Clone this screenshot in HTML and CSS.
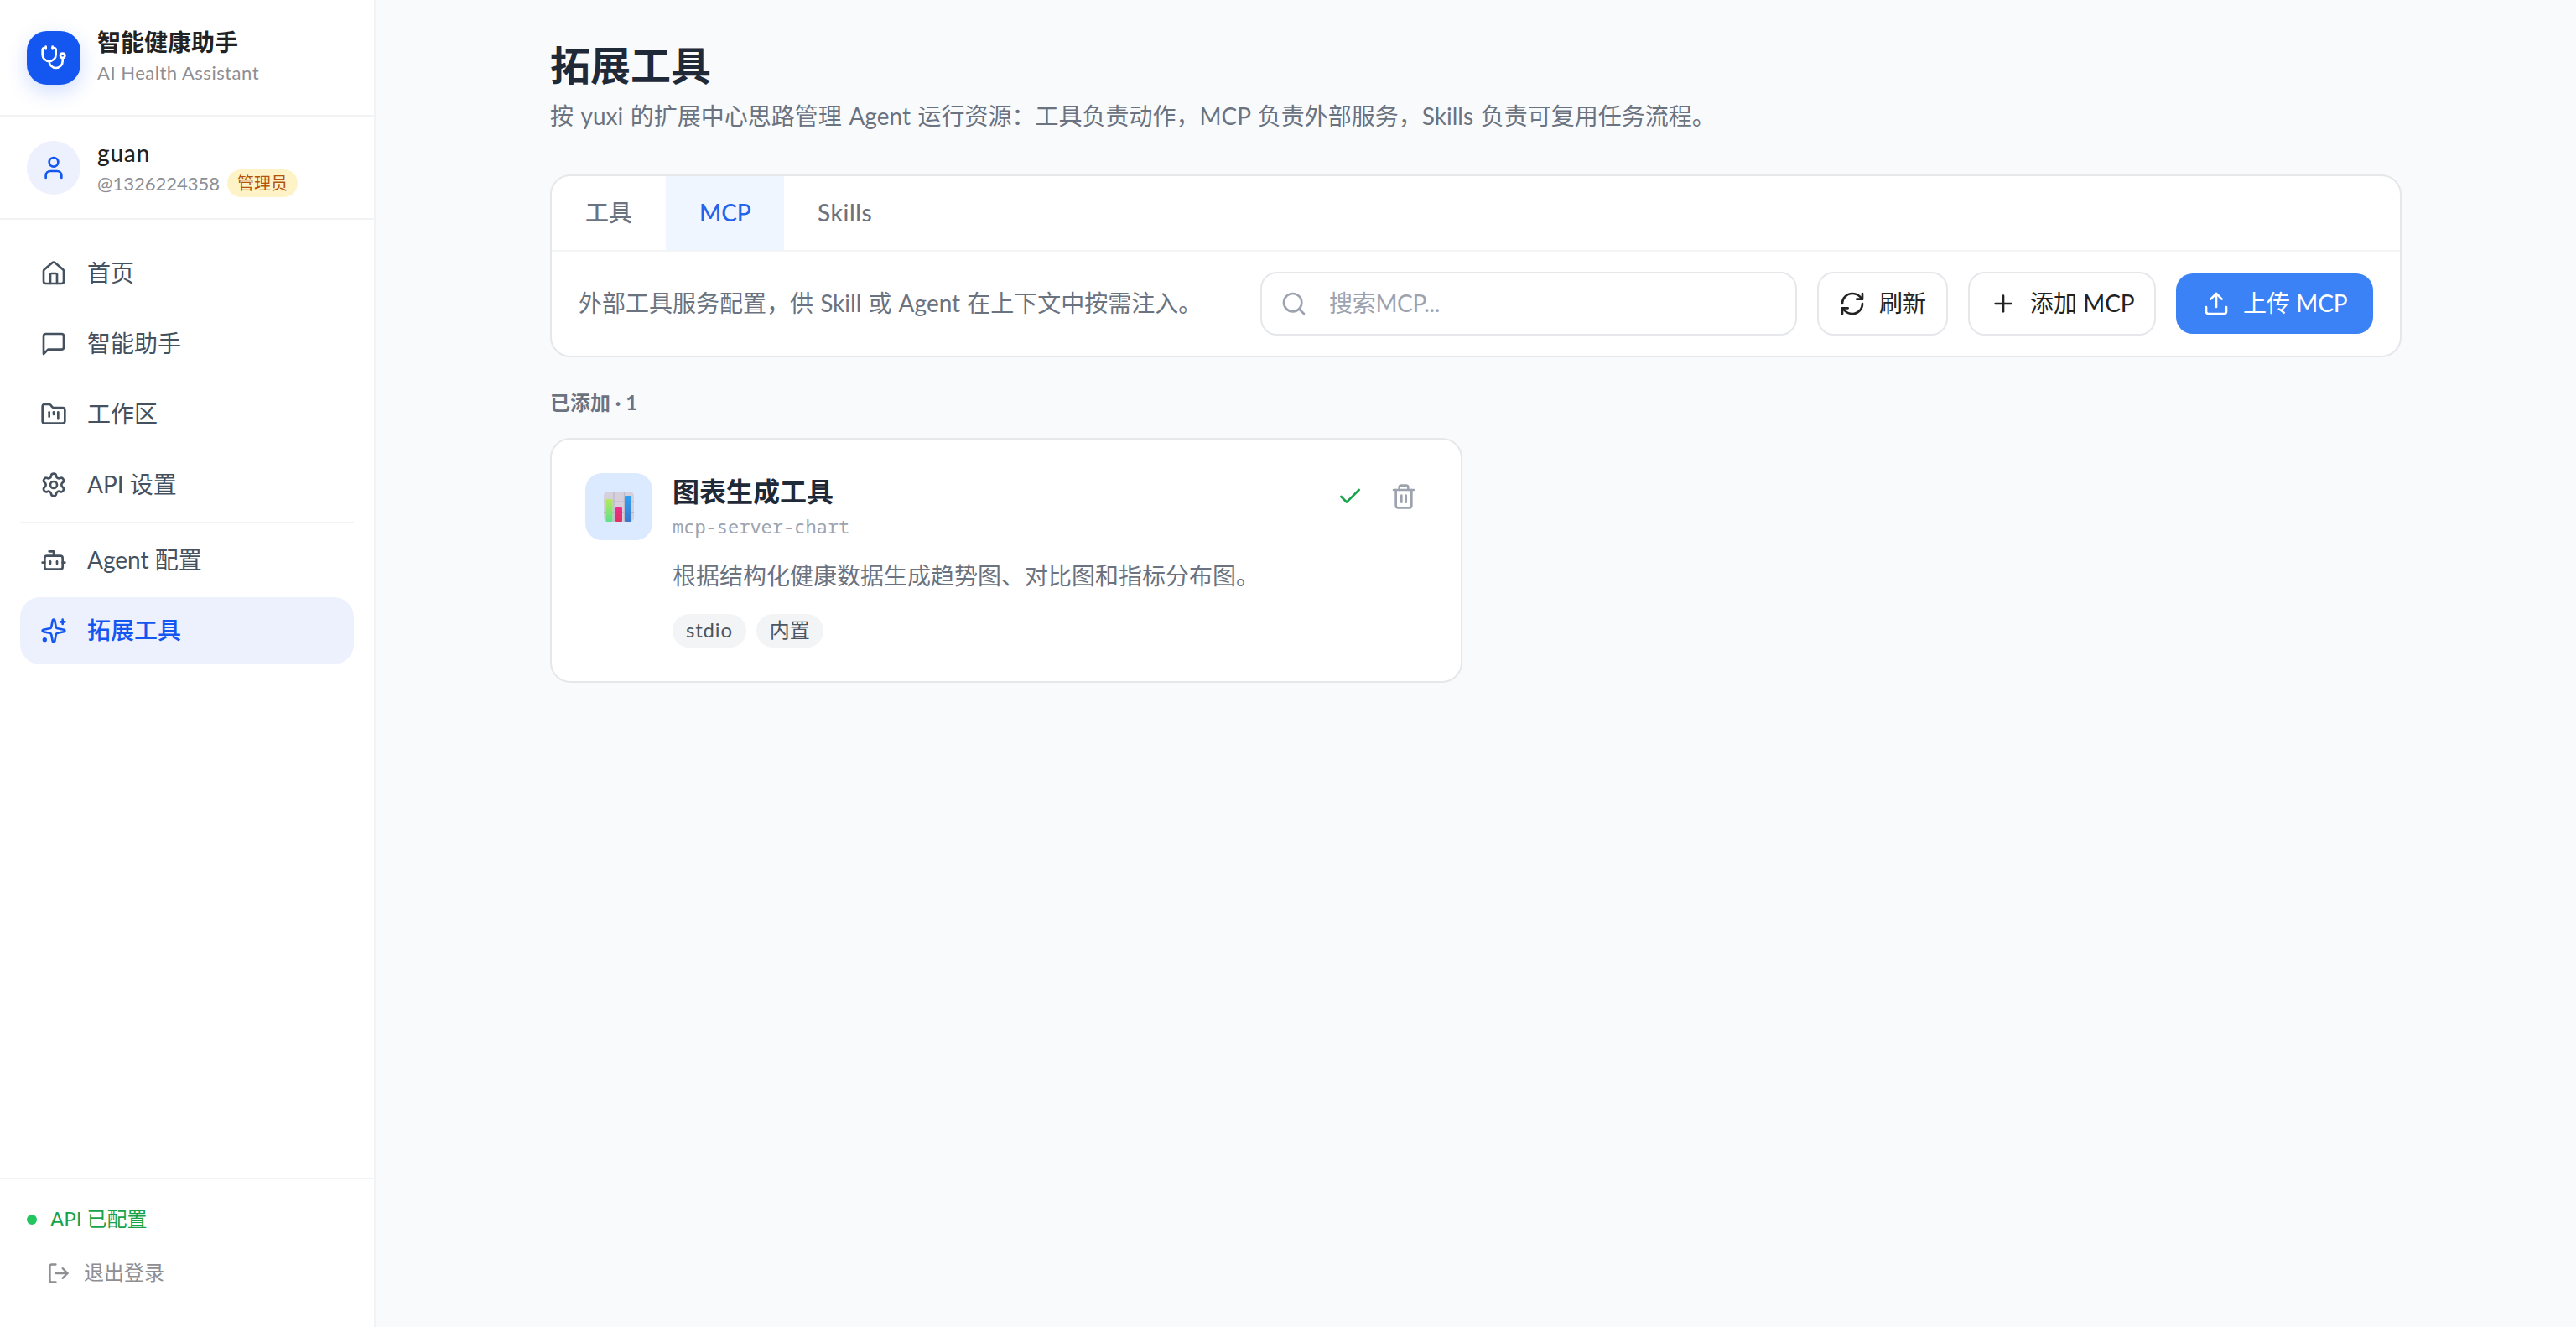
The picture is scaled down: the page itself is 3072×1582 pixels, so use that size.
FILE: index.html
```html
<!DOCTYPE html>
<html lang="zh-CN">
<head>
    <meta charset="UTF-8">
    <meta name="viewport" content="width=device-width, initial-scale=1">
    <title>智能健康助手 - 拓展工具</title>
    <link rel="stylesheet" href="styles.css">
</head>
<body>
<!-- 侧边栏 -->
<aside class="sidebar">
    <div class="brand">
        <div class="brand-logo">
            <svg class="icon" viewBox="0 0 24 24"><path d="M11 2v2"/><path d="M5 2v2"/><path d="M5 3H4a2 2 0 0 0-2 2v4a6 6 0 0 0 12 0V5a2 2 0 0 0-2-2h-1"/><path d="M8 15a6 6 0 0 0 12 0v-3"/><circle cx="20" cy="10" r="2"/></svg>
        </div>
        <div class="brand-text">
            <h2>智能健康助手</h2>
            <p>AI Health Assistant</p>
        </div>
    </div>
    <div class="user">
        <div class="avatar">
            <svg class="icon" viewBox="0 0 24 24"><path d="M19 21v-2a4 4 0 0 0-4-4H9a4 4 0 0 0-4 4v2"/><circle cx="12" cy="7" r="4"/></svg>
        </div>
        <div class="user-text">
            <div class="user-name">guan</div>
            <div class="user-meta"><span class="user-id">@1326224358</span><span class="role">管理员</span></div>
        </div>
    </div>
    <nav class="menu">
        <a href="#" class="menu-item">
            <svg class="icon" viewBox="0 0 24 24"><path d="M15 21v-8a1 1 0 0 0-1-1h-4a1 1 0 0 0-1 1v8"/><path d="M3 10a2 2 0 0 1 .709-1.528l7-5.999a2 2 0 0 1 2.582 0l7 5.999A2 2 0 0 1 21 10v9a2 2 0 0 1-2 2H5a2 2 0 0 1-2-2z"/></svg>
            <span>首页</span>
        </a>
        <a href="#" class="menu-item">
            <svg class="icon" viewBox="0 0 24 24"><path d="M21 15a2 2 0 0 1-2 2H7l-4 4V5a2 2 0 0 1 2-2h14a2 2 0 0 1 2 2z"/></svg>
            <span>智能助手</span>
        </a>
        <a href="#" class="menu-item">
            <svg class="icon" viewBox="0 0 24 24"><path d="M4 20h16a2 2 0 0 0 2-2V8a2 2 0 0 0-2-2h-7.93a2 2 0 0 1-1.66-.9l-.82-1.2A2 2 0 0 0 7.93 3H4a2 2 0 0 0-2 2v13c0 1.1.9 2 2 2Z"/><path d="M8 10v4"/><path d="M12 10v2"/><path d="M16 10v6"/></svg>
            <span>工作区</span>
        </a>
        <a href="#" class="menu-item">
            <svg class="icon" viewBox="0 0 24 24"><path d="M9.671 4.136a2.34 2.34 0 0 1 4.659 0 2.34 2.34 0 0 0 3.319 1.915 2.34 2.34 0 0 1 2.33 4.033 2.34 2.34 0 0 0 0 3.831 2.34 2.34 0 0 1-2.33 4.033 2.34 2.34 0 0 0-3.319 1.915 2.34 2.34 0 0 1-4.659 0 2.34 2.34 0 0 0-3.32-1.915 2.34 2.34 0 0 1-2.33-4.033 2.34 2.34 0 0 0 0-3.831A2.34 2.34 0 0 1 6.35 6.051a2.34 2.34 0 0 0 3.319-1.915"/><circle cx="12" cy="12" r="3"/></svg>
            <span>API 设置</span>
        </a>
        <div class="menu-divider"></div>
        <a href="#" class="menu-item">
            <svg class="icon" viewBox="0 0 24 24"><path d="M12 8V4H8"/><rect width="16" height="12" x="4" y="8" rx="2"/><path d="M2 14h2"/><path d="M20 14h2"/><path d="M15 13v2"/><path d="M9 13v2"/></svg>
            <span>Agent 配置</span>
        </a>
        <a href="#" class="menu-item active">
            <svg class="icon" viewBox="0 0 24 24"><path d="M11.017 2.814a1 1 0 0 1 1.966 0l1.051 5.558a2 2 0 0 0 1.594 1.594l5.558 1.051a1 1 0 0 1 0 1.966l-5.558 1.051a2 2 0 0 0-1.594 1.594l-1.051 5.558a1 1 0 0 1-1.966 0l-1.051-5.558a2 2 0 0 0-1.594-1.594l-5.558-1.051a1 1 0 0 1 0-1.966l5.558-1.051a2 2 0 0 0 1.594-1.594z"/><path d="M20 2v4"/><path d="M22 4h-4"/><circle cx="4" cy="20" r="1" /></svg>
            <span>拓展工具</span>
        </a>
    </nav>
    <div class="sidebar-footer">
        <div class="api-status"><span class="dot"></span><span class="label">API 已配置</span></div>
        <a href="#" class="logout">
            <svg class="icon" viewBox="0 0 24 24"><path d="m16 17 5-5-5-5"/><path d="M21 12H9"/><path d="M9 21H5a2 2 0 0 1-2-2V5a2 2 0 0 1 2-2h4"/></svg>
            <span class="label">退出登录</span>
        </a>
    </div>
</aside>

<!-- 内容区 -->
<main class="content">
    <div class="container">
        <h1>拓展工具</h1>
        <p class="subtitle">按 yuxi 的扩展中心思路管理 Agent 运行资源：工具负责动作，MCP 负责外部服务，Skills 负责可复用任务流程。</p>

        <section class="panel">
            <div class="tabs">
                <button class="tab">工具</button>
                <button class="tab active">MCP</button>
                <button class="tab tab-skills">Skills</button>
            </div>
            <div class="toolbar">
                <p class="toolbar-text">外部工具服务配置，供 Skill 或 Agent 在上下文中按需注入。</p>
                <label class="search">
                    <svg class="icon" viewBox="0 0 24 24"><path d="m21 21-4.34-4.34"/><circle cx="11" cy="11" r="8"/></svg>
                    <input type="text" placeholder="搜索MCP...">
                </label>
                <button class="btn btn-refresh">
                    <svg class="icon" viewBox="0 0 24 24"><path d="M3 12a9 9 0 0 1 9-9 9.75 9.75 0 0 1 6.74 2.74L21 8"/><path d="M21 3v5h-5"/><path d="M21 12a9 9 0 0 1-9 9 9.75 9.75 0 0 1-6.74-2.74L3 16"/><path d="M8 16H3v5"/></svg>
                    <span>刷新</span>
                </button>
                <button class="btn btn-add">
                    <svg class="icon" viewBox="0 0 24 24"><path d="M5 12h14"/><path d="M12 5v14"/></svg>
                    <span>添加 MCP</span>
                </button>
                <button class="btn btn-primary">
                    <svg class="icon" viewBox="0 0 24 24"><path d="M12 3v12"/><path d="m17 8-5-5-5 5"/><path d="M21 15v4a2 2 0 0 1-2 2H5a2 2 0 0 1-2-2v-4"/></svg>
                    <span>上传 MCP</span>
                </button>
            </div>
        </section>

        <h3 class="group-title">已添加 · 1</h3>
        <div class="grid">
            <article class="card">
                <div class="card-icon">
                    <!-- 柱状图 -->
                    <svg class="chart" viewBox="0 0 36 36">
                        <defs>
                            <linearGradient id="barGreen" x1="0" y1="0" x2="0" y2="1"><stop offset="0" stop-color="#b4e95c"/><stop offset="1" stop-color="#5fe08c"/></linearGradient>
                            <linearGradient id="barPink" x1="0" y1="0" x2="0" y2="1"><stop offset="0" stop-color="#ef2e8c"/><stop offset="1" stop-color="#dc3360"/></linearGradient>
                            <linearGradient id="barBlue" x1="0" y1="0" x2="0" y2="1"><stop offset="0" stop-color="#2fa2f5"/><stop offset="1" stop-color="#3a78cc"/></linearGradient>
                        </defs>
                        <rect width="36" height="36" rx="5" fill="#d6d0dc"/>
                        <path d="M12 0v36M24.500 0v36M0 12h36M0 24.500h36" stroke="#bdb7c6" stroke-width="1.200"/>
                        <rect x="2.500" y="9" width="8" height="27" rx="1" fill="url(#barGreen)"/>
                        <rect x="14" y="19" width="8" height="17" rx="1" fill="url(#barPink)"/>
                        <rect x="25" y="5" width="8" height="31" rx="1" fill="url(#barBlue)"/>
                    </svg>
                </div>
                <div class="card-body">
                    <h4>图表生成工具</h4>
                    <div class="card-slug">mcp-server-chart</div>
                    <p class="card-desc">根据结构化健康数据生成趋势图、对比图和指标分布图。</p>
                    <div class="tags"><span class="tag tag-latin">stdio</span><span class="tag">内置</span></div>
                </div>
                <div class="card-actions">
                    <button class="icon-btn check"><svg class="icon" viewBox="0 0 24 24"><path d="M20 6 9 17l-5-5"/></svg></button>
                    <button class="icon-btn"><svg class="icon" viewBox="0 0 24 24"><path d="M3 6h18"/><path d="M19 6v14a2 2 0 0 1-2 2H7a2 2 0 0 1-2-2V6"/><path d="M8 6V4a2 2 0 0 1 2-2h4a2 2 0 0 1 2 2v2"/><path d="M10 11v6"/><path d="M14 11v6"/></svg></button>
                </div>
            </article>
        </div>
    </div>
</main>
</body>
</html>
```
FILE: styles.css
```css
/* 全局 */
* { box-sizing: border-box; margin: 0; padding: 0; }
body {
    font-family: Lato, "Noto Sans CJK SC", sans-serif;
    font-size: 28px;
    line-height: 40px;
    color: #222222;
    background: #f9fafc;
    display: flex;
    height: 100vh;
    overflow: hidden;
}
a { color: inherit; text-decoration: none; }
button { font: inherit; background: none; border: none; cursor: pointer; }
.icon {
    width: 32px;
    height: 32px;
    flex-shrink: 0;
    fill: none;
    stroke: currentColor;
    stroke-width: 2;
    stroke-linecap: round;
    stroke-linejoin: round;
}

/* 侧边栏 */
.sidebar {
    width: 448px;
    flex-shrink: 0;
    display: flex;
    flex-direction: column;
    background: #fff;
    border-right: 2px solid #f2f3f5;
}
.brand {
    display: flex;
    align-items: center;
    gap: 20px;
    height: 139px;
    padding: 0 32px;
    border-bottom: 2px solid #f2f3f5;
}
.brand-logo {
    width: 64px;
    height: 64px;
    display: flex;
    align-items: center;
    justify-content: center;
    border-radius: 24px;
    background: #1456f0;
    color: #fff;
    box-shadow: 0 8px 24px rgba(20,86,240,0.2);
}
.brand-text h2 { font-size: 28px; line-height: 36px; font-weight: 700; }
.brand-text p {
    font-size: 22px;
    line-height: 37px;
    letter-spacing: 0.5px;
    color: #8e8e93;
}
.user {
    display: flex;
    align-items: center;
    gap: 20px;
    height: 123px;
    padding: 0 32px;
    border-bottom: 2px solid #f2f3f5;
}
.avatar {
    width: 64px;
    height: 64px;
    display: flex;
    align-items: center;
    justify-content: center;
    border-radius: 50%;
    background: #edf1fe;
    color: #1456f0;
}
.user-name {
    line-height: 36px;
    padding-bottom: 2px;
    font-weight: 500;
    letter-spacing: 0.8px;
}
.user-meta {
    display: flex;
    align-items: center;
    gap: 9px;
    font-size: 22px;
    line-height: 33px;
    color: #8e8e93;
}
.role {
    padding: 0 12px;
    border-radius: 17px;
    font-size: 20px;
    background: #fef3c7;
    color: #b45309;
}

/* 菜单 */
.menu {
    flex: 1;
    display: flex;
    flex-direction: column;
    gap: 4px;
    padding: 24px 24px 0;
}
.menu-item {
    display: flex;
    align-items: center;
    gap: 24px;
    height: 80px;
    padding: 0 24px;
    border-radius: 24px;
    color: #45515e;
}
.menu-item span, .btn span { padding-bottom: 3px; }
.menu-item.active {
    font-weight: 500;
    background: #edf1fe;
    color: #1456f0;
}
.menu-divider { height: 2px; background: #f2f3f5; }
.sidebar-footer {
    height: 178px;
    padding: 28px 32px;
    border-top: 2px solid #f2f3f5;
    font-size: 24px;
}
.sidebar-footer .label { padding-bottom: 2px; line-height: 38px; }
.api-status {
    display: flex;
    align-items: center;
    gap: 16px;
    color: #16a34a;
}
.dot {
    width: 12px;
    height: 12px;
    border-radius: 50%;
    background: #22c55e;
}
.logout {
    display: flex;
    align-items: center;
    gap: 16px;
    margin-top: 24px;
    padding-left: 24px;
    color: #8e8e93;
}
.logout .icon { width: 28px; height: 28px; }

/* 内容区 */
.content {
    flex: 1;
    padding: 48px 208px;
}
h1 {
    font-size: 48px;
    line-height: 60px;
    font-weight: 700;
    color: #1f2937;
}
.subtitle {
    margin-top: 10px;
    color: #6b7280;
    word-spacing: 1.4px;
}
.panel {
    margin-top: 50px;
    border: 2px solid #e5e7eb;
    border-radius: 24px;
    background: #fff;
    overflow: hidden;
}
.tabs {
    display: flex;
    height: 90px;
    border-bottom: 2px solid #f3f4f6;
}
.tab {
    padding: 0 40px 3px;
    font-weight: 500;
    color: #6b7280;
}
.tab.active {
    width: 141px;
    background: #eff6ff;
    color: #2563eb;
}
.tab-skills { letter-spacing: 0.6px; }
.toolbar {
    display: flex;
    align-items: center;
    gap: 24px;
    padding: 24px 32px;
}
.toolbar-text {
    flex: 1;
    padding-bottom: 3px;
    white-space: nowrap;
    color: #6b7280;
    word-spacing: 1px;
}
.search {
    display: flex;
    align-items: center;
    gap: 26px;
    width: 640px;
    height: 76px;
    padding: 0 22px;
    border: 2px solid #e5e7eb;
    border-radius: 20px;
    color: #9ca3af;
}
.search input {
    flex: 1;
    min-width: 0;
    padding-bottom: 3px;
    border: none;
    outline: none;
    font: inherit;
    background: none;
}
.search input::placeholder { color: #9ca3af; letter-spacing: -0.3px; }
.btn {
    display: flex;
    align-items: center;
    gap: 16px;
    height: 76px;
    padding: 0 24px;
    border: 2px solid #e5e7eb;
    border-radius: 20px;
    white-space: nowrap;
    color: #222222;
}
.btn-add { width: 224px; }
.btn-primary {
    width: 235px;
    height: 72px;
    padding: 0 32px;
    border: none;
    background: #3b82f6;
    color: #fff;
}

/* 工具卡片 */
.group-title {
    margin-top: 36px;
    font-size: 24px;
    line-height: 36px;
    font-weight: 700;
    color: #6b7280;
}
.grid {
    display: grid;
    grid-template-columns: 1fr 1fr;
    gap: 32px;
    margin-top: 24px;
}
.card {
    display: flex;
    gap: 24px;
    height: 292px;
    padding: 40px;
    border: 2px solid #e5e7eb;
    border-radius: 24px;
    background: #fff;
}
.card-icon {
    width: 80px;
    height: 80px;
    display: flex;
    align-items: center;
    justify-content: center;
    border-radius: 20px;
    background: #dbeafe;
}
.chart { width: 36px; height: 36px; }
.card-body { flex: 1; }
.card-body h4 {
    font-size: 32px;
    line-height: 44px;
    font-weight: 700;
    color: #1f2937;
}
.card-slug {
    margin-top: 3px;
    font-family: "Noto Sans Mono", "Liberation Mono", monospace;
    font-size: 22px;
    line-height: 32px;
    color: #9ca3af;
}
.card-desc {
    margin-top: 20px;
    line-height: 46px;
    color: #6b7280;
}
.tags {
    display: flex;
    gap: 12px;
    margin-top: 23px;
}
.tag {
    padding: 0 16px 2px;
    border-radius: 20px;
    font-size: 24px;
    line-height: 38px;
    background: #f3f4f6;
    color: #4b5563;
}
.tag-latin { letter-spacing: 0.8px; }
.card-actions { display: flex; gap: 8px; }
.icon-btn {
    width: 56px;
    height: 56px;
    display: flex;
    align-items: center;
    justify-content: center;
    color: #9ca3af;
}
.icon-btn.check { color: #16a34a; }
```
